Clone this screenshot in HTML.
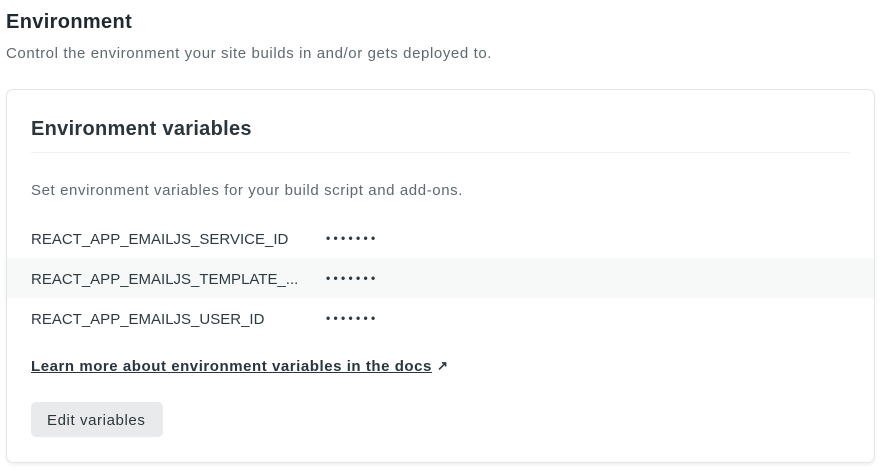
<!DOCTYPE html>
<html><head><style>
body{margin:0;background:#fff;font-family:"Liberation Sans",sans-serif;color:#2d3b41;width:884px;height:474px;overflow:hidden;position:relative}
.a{position:absolute;white-space:nowrap}
.d{position:absolute;font-size:12px;letter-spacing:3.3px;font-weight:bold}
</style></head><body>
<div class="a" style="left:6px;top:11px;font-size:20px;font-weight:bold;color:#1f2a30;letter-spacing:0.35px">Environment</div>
<div class="a" style="left:6px;top:45px;font-size:15px;color:#5d6a70;letter-spacing:0.6px">Control the environment your site builds in and/or gets deployed to.</div>
<div class="a" style="left:6px;top:89px;width:867px;height:372px;border:1px solid #e3e6e8;border-radius:7px;box-shadow:0 2px 3px rgba(0,0,0,0.06)"></div>
<div class="a" style="left:31px;top:118px;font-size:20px;font-weight:bold;color:#2a363c;letter-spacing:0.3px">Environment variables</div>
<div class="a" style="left:31px;top:152px;width:819px;height:1px;background:#eef0f1"></div>
<div class="a" style="left:31px;top:182px;font-size:15px;color:#5d6a70;letter-spacing:0.6px">Set environment variables for your build script and add-ons.</div>
<div class="a" style="left:7px;top:258px;width:867px;height:40px;background:#f7f9f9"></div>
<div class="a" style="left:31px;top:231px;font-size:15px">REACT_APP_EMAILJS_SERVICE_ID</div>
<div class="a" style="left:31px;top:271px;font-size:15px">REACT_APP_EMAILJS_TEMPLATE_...</div>
<div class="a" style="left:31px;top:311px;font-size:15px">REACT_APP_EMAILJS_USER_ID</div>
<div class="d" style="left:326px;top:231px">•••••••</div>
<div class="d" style="left:326px;top:271px">•••••••</div>
<div class="d" style="left:326px;top:311px">•••••••</div>
<div class="a" style="left:31px;top:358px;font-size:15px;font-weight:bold;text-decoration:underline;color:#2a363c;letter-spacing:0.55px">Learn more about environment variables in the docs</div>
<div class="a" style="left:437px;top:358px;font-size:13px;font-weight:bold">↗</div>
<div class="a" style="left:31px;top:402px;width:132px;height:35px;background:#e9eaeb;border-radius:5px"></div>
<div class="a" style="left:47px;top:412px;font-size:15px;color:#2a363c;letter-spacing:0.6px">Edit variables</div>
</body></html>
